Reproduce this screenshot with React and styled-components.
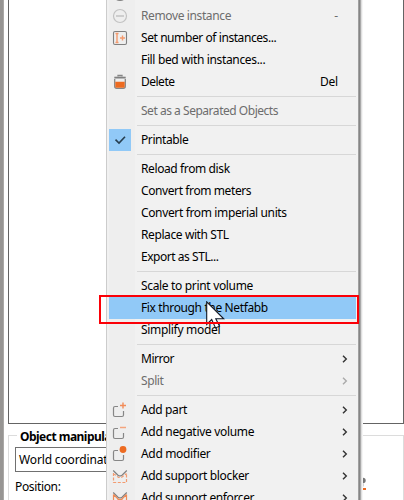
import React from 'react';
import styled, { createGlobalStyle } from 'styled-components';

const GlobalStyle = createGlobalStyle`
  * { box-sizing: border-box; }
  body { margin: 0; overflow: hidden; background: #fff; }
`;

const Window = styled.main`
  position: relative;
  width: 404px;
  height: 500px;
  padding-left: 8px;
  overflow: hidden;
  background: linear-gradient(90deg, #979593 0 3px, #aaa8a6 3px 4px, #fff 4px);
  font: 12px/22px 'Noto Sans', 'Open Sans', sans-serif;
  color: #000;
`;

const ObjectList = styled.section`
  height: 424px;
  border: 1px solid #646464;
  border-top: 0;
  background: #fff;
`;

const Group = styled.section`
  height: 80px;
  margin-top: 11px;
  padding: 0 6px;
  border: 1px solid #dcdcdc;
`;

const GroupTitle = styled.h2`
  width: max-content;
  height: 12px;
  margin: -9px 0 8px 2px;
  padding: 0 3px;
  background: #fff;
  font-size: 12px;
  line-height: 19px;
  font-weight: 700;
  letter-spacing: -0.52px;
  white-space: nowrap;
`;

const Combo = styled.div`
  width: 200px;
  height: 25px;
  padding-left: 3px;
  border: 1px solid #707070;
  background: #fff;
  line-height: 24px;
  letter-spacing: -0.15px;
`;

const PositionRow = styled.div`
  display: flex;
  justify-content: space-between;
  height: 28px;
  padding-top: 4px;
  letter-spacing: -0.35px;
`;

const ToolIcon = styled.svg`
  width: 16px;
  height: 16px;
  margin: 0 26px 0 0;
`;

const Menu = styled.div`
  position: absolute;
  left: 106px;
  top: -17px;
  width: 253px;
  height: 540px;
  padding: 0 2px;
  border-left: 1px solid #ccc;
  border-right: 1px solid #a0a0a0;
  background: linear-gradient(90deg, #f1f1f1 0 2px, #eee 2px 28px, #f1f1f1 28px);
  box-shadow: 1px 0 #858585, 2px 0 #a9a9a9, 3px 0 #dedede, 4px 0 #f5f5f5;
`;

const Item = styled.div`
  display: grid;
  grid-template-columns: 22px 1fr auto;
  column-gap: 10px;
  align-items: center;
  height: 22px;
  padding-right: 7px;
  background: ${({ $active }) => ($active ? '#91c9f7' : 'transparent')};
  color: ${({ $disabled }) => ($disabled ? '#6d6d6d' : '#000')};
  white-space: nowrap;
`;

const IconCell = styled.span`
  display: grid;
  place-items: center;
  width: 22px;
  height: 22px;
  background: ${({ $checked }) => ($checked ? '#91c9f7' : 'transparent')};
`;

const Icon = styled.svg`
  width: 16px;
  height: 16px;
  overflow: visible;
`;

const Label = styled.span`
  letter-spacing: ${({ $track }) => $track}px;
`;

const Shortcut = styled.span`
  padding-right: 11px;
  letter-spacing: -0.2px;
`;

const Divider = styled.div`
  height: 7px;
  margin-left: 28px;
  background: linear-gradient(transparent 3px, #d7d7d7 3px 4px, transparent 4px);
`;

const Arrow = styled.svg`
  width: 8px;
  height: 10px;
`;

const Highlight = styled.div`
  position: absolute;
  left: 99px;
  top: 295px;
  width: 260px;
  height: 29px;
  border: 2px solid #fb0007;
`;

const Cursor = styled.svg`
  position: absolute;
  left: 206px;
  top: 301px;
  width: 19px;
  height: 29px;
`;

const openBox = (
  <path d="M6 4.5H3q-1.5 0-1.5 1.5v7q0 1.5 1.5 1.5h7q1.5 0 1.5-1.5V9" fill="none" stroke="#868686" strokeWidth="1.2" />
);

const glyphs = {
  add: (
    <g fill="none" stroke="#808080" strokeWidth="1.2">
      <circle cx="8" cy="8" r="6.5" /><path d="M4 8h8M8 4v8" />
    </g>
  ),
  remove: (
    <g fill="none" stroke="#c2c2c2" strokeWidth="1.2">
      <circle cx="8" cy="8" r="6.5" /><path d="M4 8h8" strokeWidth="1.5" />
    </g>
  ),
  number: (
    <>
      <rect x="1.5" y="1.5" width="13" height="13" rx="1.5" fill="none" stroke="#808080" strokeWidth="1.1" />
      <path d="M3.5 3.5h3M3.5 12.5h3M5 3.5v9M8 8h5M10.5 5.5v5" fill="none" stroke="#f49a6d" strokeWidth="1.4" />
    </>
  ),
  trash: (
    <>
      <path d="M2.3 3.6h11.4" stroke="#808080" strokeWidth="1.8" />
      <path d="M6 2.6V1.5h4v1.1M2.7 5v7.3q0 2 2 2h6.6q2 0 2-2V5" fill="none" stroke="#868686" strokeWidth="1.3" />
      <path d="M3.3 7.8h9.4v4.7q0 1.2-1.2 1.2h-7q-1.2 0-1.2-1.2z" fill="#ed6b21" />
    </>
  ),
  check: <path d="M3.5 7.7 7 11l6-6.3" fill="none" stroke="#263e50" strokeWidth="1.6" />,
  part: (
    <>
      {openBox}
      <path d="M8 3.5h6M11 .5v6" stroke="#f28c58" strokeWidth="1.4" />
    </>
  ),
  negative: (
    <>
      {openBox}
      <path d="M8 3.5h6" stroke="#f4a47d" strokeWidth="1.5" />
    </>
  ),
  modifier: (
    <>
      {openBox}
      <circle cx="11" cy="3.5" r="3.4" fill="#ed6b21" />
    </>
  ),
  blocker: (
    <g fill="none">
      <path d="M1.2 2.5 6 7.2q2 1.5 4 0l4.8-4.7" stroke="#808080" strokeWidth="1.2" />
      <path d="M1.5 5v9.5h13V5M1.5 5.5l5 4h3l5-4" stroke="#f39b70" strokeWidth="1.2" strokeDasharray="3 1.6" />
    </g>
  ),
  enforcer: (
    <g fill="none">
      <path d="M1.2 2.5 6 7.2q2 1.5 4 0l4.8-4.7" stroke="#808080" strokeWidth="1.2" />
      <path d="M1.5 4.5v10h13v-10M1.5 4.5l5 5h3l5-5M2 14l5-5M14 14 9 9" stroke="#f08b57" strokeWidth="1.2" />
    </g>
  ),
};

const entries = [
  { label: 'Add instance', icon: 'add', key: '+' },
  { label: 'Remove instance', icon: 'remove', key: '-', disabled: true, track: -0.38 },
  { label: 'Set number of instances...', icon: 'number', track: -0.42 },
  { label: 'Fill bed with instances...', track: -0.35 },
  { label: 'Delete', icon: 'trash', key: 'Del', track: -0.5 },
  null,
  { label: 'Set as a Separated Objects', disabled: true, track: -0.47 },
  null,
  { label: 'Printable', icon: 'check', checked: true, track: -0.42 },
  null,
  { label: 'Reload from disk', track: -0.39 },
  { label: 'Convert from meters', track: -0.4 },
  { label: 'Convert from imperial units', track: -0.36 },
  { label: 'Replace with STL', track: -0.4 },
  { label: 'Export as STL...', track: -0.46 },
  null,
  { label: 'Scale to print volume', track: -0.33 },
  { label: 'Fix through the Netfabb', active: true, track: -0.37 },
  { label: 'Simplify model', track: -0.31 },
  null,
  { label: 'Mirror', submenu: true, track: -0.5 },
  { label: 'Split', submenu: true, disabled: true, track: -0.4 },
  null,
  { label: 'Add part', icon: 'part', submenu: true, track: -0.38 },
  { label: 'Add negative volume', icon: 'negative', submenu: true, track: -0.31 },
  { label: 'Add modifier', icon: 'modifier', submenu: true, track: -0.33 },
  { label: 'Add support blocker', icon: 'blocker', submenu: true, track: -0.36 },
  { label: 'Add support enforcer', icon: 'enforcer', submenu: true, track: -0.39 },
];

function MenuItem({ entry }) {
  return (
    <Item $active={entry.active} $disabled={entry.disabled}>
      <IconCell $checked={entry.checked}>
        {entry.icon && <Icon viewBox="0 0 16 16">{glyphs[entry.icon]}</Icon>}
      </IconCell>
      <Label $track={entry.track ?? -0.25}>{entry.label}</Label>
      {entry.key && <Shortcut>{entry.key}</Shortcut>}
      {entry.submenu && (
        <Arrow viewBox="0 0 8 10">
          <path d="m2 1.7 3.3 3.3L2 8.3" fill="none" stroke={entry.disabled ? '#aaa' : '#333'} strokeWidth="1.4" />
        </Arrow>
      )}
    </Item>
  );
}

export default function App() {
  return (
    <>
      <GlobalStyle />
      <Window>
        <ObjectList />
        <Group>
          <GroupTitle>Object manipulation</GroupTitle>
          <Combo>World coordinates</Combo>
          <PositionRow>
            <span>Position:</span>
            <ToolIcon viewBox="0 0 16 16">
              <circle cx="8" cy="4.5" r="2.7" fill="#777" />
              <path d="M4 10.5h4V7.5" fill="none" stroke="#aaa" />
              <path d="M2 13h9" stroke="#ed6b21" strokeWidth="2" />
            </ToolIcon>
          </PositionRow>
        </Group>
        <Menu>
          {entries.map((entry, index) => (entry ? <MenuItem key={index} entry={entry} /> : <Divider key={index} />))}
        </Menu>
        <Cursor viewBox="0 0 19 29">
          <path d="M.7.8v22.7l5-5 3.8 8.4 4-1.7-3.7-7.4h7.9z" fill="#fff" stroke="#111827" strokeWidth="1.1" />
        </Cursor>
        <Highlight />
      </Window>
    </>
  );
}
